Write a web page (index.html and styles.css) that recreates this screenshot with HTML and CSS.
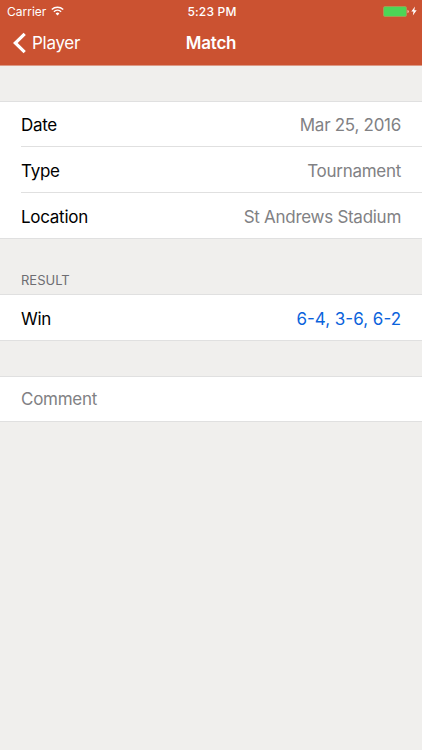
FILE: index.html
```html
<!DOCTYPE html>
<html lang="en">
<head>
  <meta charset="UTF-8"/>
  <meta name="viewport" content="width=device-width,initial-scale=1.0"/>
  <title>Match</title>
  <link rel="stylesheet" href="styles.css">
</head>
<body>
  <header>
    <div class="status-bar">
      <div class="carrier">
        <span>Carrier</span>
        <svg class="wifi" viewBox="0 0 13 10">
          <path d="M.8 3.5a8.3 8.3 0 0 1 11.4 0M2.9 5.7a5.2 5.2 0 0 1 7.2 0" fill="none" stroke="#fff" stroke-width="1.5"/>
          <path d="M4.6 7.4a2.7 2.7 0 0 1 3.8 0L6.5 9.4z" fill="#fff"/>
        </svg>
      </div>
      <span class="time">5:23 PM</span>
      <div class="power">
        <svg class="battery" viewBox="0 0 26 11">
          <rect x=".5" y=".5" width="23" height="10" rx="1.5" fill="#4cd656" stroke="#a39b52"/>
          <path d="M24.5 3.8q1.3.4 1.3 1.7t-1.300 1.700z" fill="#f3c9b8"/>
        </svg>
        <svg class="bolt" viewBox="0 0 6 10">
          <path d="M4 .5L.3 5.6h2.2L1.8 9.5l3.9-5.200H3.300z" fill="#fff"/>
        </svg>
      </div>
    </div>
    <nav class="nav-bar">
      <a class="back" href="#">
        <svg viewBox="0 0 14 22"><path d="M11.7 1.8L2.3 11l9.4 9.200" fill="none" stroke="#fff" stroke-width="3.2"/></svg>
        <span>Player</span>
      </a>
      <h1>Match</h1>
    </nav>
  </header>

  <main>
    <ul class="group details">
      <li><span>Date</span><span class="value">Mar 25, 2016</span></li>
      <li><span>Type</span><span class="value">Tournament</span></li>
      <li><span>Location</span><span class="value">St Andrews Stadium</span></li>
    </ul>

    <h2>RESULT</h2>
    <ul class="group result">
      <li><span>Win</span><span class="value score">6-4, 3-6, 6-2</span></li>
    </ul>

    <ul class="group comment">
      <li><span class="placeholder">Comment</span></li>
    </ul>
  </main>
</body>
</html>
```
FILE: styles.css
```css
:root {
  --bg: #f0efed;
  --bar: #cb5231;
  --line: #e0e0e0;
  --muted: #818184;
  --link: #0b63dc;
}
* { box-sizing: border-box; }
body {
  margin: 0;
  min-height: 100vh;
  background: var(--bg); color: #000;
  font-family: Inter, 'Liberation Sans', sans-serif;
  font-size: 17px;
  letter-spacing: -0.28px;
}
header {
  height: 66px;
  background: var(--bar); color: #fff;
  border-bottom: 1px solid #dc9985;
}

.status-bar {
  display: grid; grid-template-columns: 1fr auto 1fr;
  align-items: center;
  height: 22px;
  padding: 0 5px 0 7px;
  font-size: 12px;
}
.carrier { display: flex; align-items: center; gap: 5px; letter-spacing: 0; }
.wifi { width: 13px; height: 10px; }
.time { font-weight: 500; letter-spacing: 0.2px; }
.power { display: flex; align-items: center; justify-content: flex-end; gap: 2px; }
.battery { width: 26px; height: 11px; }
.bolt { width: 6px; height: 10px; }

.nav-bar {
  display: grid; grid-template-columns: 1fr auto 1fr;
  align-items: center;
  height: 42px;
  padding: 0 13px;
}
.back {
  display: flex; align-items: center; gap: 5px;
  color: #fff;
  text-decoration: none;
}
.back svg { width: 14px; height: 22px; }
h1 { margin: 0; font-size: 17px; font-weight: 600; letter-spacing: -0.2px; }

/* Table groups */
.group {
  margin: 0; padding: 0 0 0 21px;
  list-style: none;
  background: #fff;
  border-top: 1px solid var(--line);
  border-bottom: 1px solid var(--line);
}
.group li {
  display: flex; align-items: center; justify-content: space-between;
  height: 45px;
  padding: 2px 21px 0 0;
}
.group li + li { height: 46px; border-top: 1px solid var(--line); }
.details { margin-top: 35px; }
.details li:first-child { height: 44px; }
.comment { margin-top: 35px; }
.comment li { height: 44px; padding-top: 0; }
.value, .placeholder { color: var(--muted); }
.score { color: var(--link); letter-spacing: 0; }

h2 {
  margin: 34px 0 6px; padding-left: 21px;
  color: #6d6d72;
  font-size: 13px; font-weight: 400;
  line-height: 15px;
  letter-spacing: 0;
}
```
